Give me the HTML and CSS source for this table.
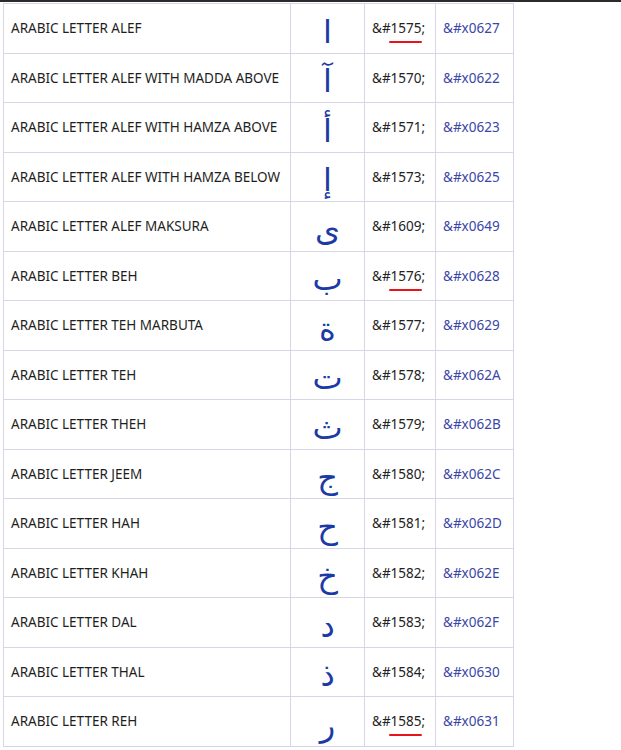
FILE: index.html
```html
<!DOCTYPE html>
<html>
<head>
<meta charset="utf-8">
<link rel="stylesheet" href="styles.css">
</head>
<body>
<div class="topbar"></div>
<table class="chars">
<tr><td class="name">ARABIC LETTER ALEF</td><td class="glyph">ا</td><td class="dec">&amp;#<span class="mark">1575</span>;</td><td class="hex">&amp;#x0627</td></tr>
<tr><td class="name">ARABIC LETTER ALEF WITH MADDA ABOVE</td><td class="glyph">آ</td><td class="dec">&amp;#1570;</td><td class="hex">&amp;#x0622</td></tr>
<tr><td class="name">ARABIC LETTER ALEF WITH HAMZA ABOVE</td><td class="glyph">أ</td><td class="dec">&amp;#1571;</td><td class="hex">&amp;#x0623</td></tr>
<tr><td class="name">ARABIC LETTER ALEF WITH HAMZA BELOW</td><td class="glyph">إ</td><td class="dec">&amp;#1573;</td><td class="hex">&amp;#x0625</td></tr>
<tr><td class="name">ARABIC LETTER ALEF MAKSURA</td><td class="glyph">ى</td><td class="dec">&amp;#1609;</td><td class="hex">&amp;#x0649</td></tr>
<tr><td class="name">ARABIC LETTER BEH</td><td class="glyph">ب</td><td class="dec">&amp;#<span class="mark">1576</span>;</td><td class="hex">&amp;#x0628</td></tr>
<tr><td class="name">ARABIC LETTER TEH MARBUTA</td><td class="glyph">ة</td><td class="dec">&amp;#1577;</td><td class="hex">&amp;#x0629</td></tr>
<tr><td class="name">ARABIC LETTER TEH</td><td class="glyph">ت</td><td class="dec">&amp;#1578;</td><td class="hex">&amp;#x062A</td></tr>
<tr><td class="name">ARABIC LETTER THEH</td><td class="glyph">ث</td><td class="dec">&amp;#1579;</td><td class="hex">&amp;#x062B</td></tr>
<tr><td class="name">ARABIC LETTER JEEM</td><td class="glyph">ج</td><td class="dec">&amp;#1580;</td><td class="hex">&amp;#x062C</td></tr>
<tr><td class="name">ARABIC LETTER HAH</td><td class="glyph">ح</td><td class="dec">&amp;#1581;</td><td class="hex">&amp;#x062D</td></tr>
<tr><td class="name">ARABIC LETTER KHAH</td><td class="glyph">خ</td><td class="dec">&amp;#1582;</td><td class="hex">&amp;#x062E</td></tr>
<tr><td class="name">ARABIC LETTER DAL</td><td class="glyph">د</td><td class="dec">&amp;#1583;</td><td class="hex">&amp;#x062F</td></tr>
<tr><td class="name">ARABIC LETTER THAL</td><td class="glyph">ذ</td><td class="dec">&amp;#1584;</td><td class="hex">&amp;#x0630</td></tr>
<tr><td class="name">ARABIC LETTER REH</td><td class="glyph">ر</td><td class="dec">&amp;#<span class="mark">1585</span>;</td><td class="hex">&amp;#x0631</td></tr>
</table>
</body>
</html>
```
FILE: styles.css
```css
html, body {
  margin: 0;
  padding: 0;
  background: #ffffff;
}
body {
  font-family: "Noto Sans", "DejaVu Sans", sans-serif;
  font-size: 13.5px;
  color: #1e1e1e;
}
.topbar {
  height: 2px;
  background: #2b2b2b;
}
.chars {
  margin: 1px 0 0 3px;
  border-collapse: collapse;
  border-spacing: 0;
}
.chars tr {
  height: 49.53px;
}
.chars td {
  border: 1px solid #d6d6e6;
  padding: 0 7px;
  vertical-align: middle;
  white-space: nowrap;
}
.name {
  width: 272px;
}
.glyph {
  width: 59px;
  text-align: center;
  font-family: "DejaVu Sans", sans-serif;
  font-size: 32px;
  line-height: 1;
  color: #1c3aa6;
  padding-top: 7px !important;
}
.dec {
  width: 56px;
  color: #222222;
}
.hex {
  width: 63px;
  color: #3a46a8;
}
.mark {
  position: relative;
}
.mark::after {
  content: "";
  position: absolute;
  left: -2px;
  right: 0;
  bottom: -6px;
  height: 2px;
  border-radius: 1px;
  background: #e8141c;
}
```
